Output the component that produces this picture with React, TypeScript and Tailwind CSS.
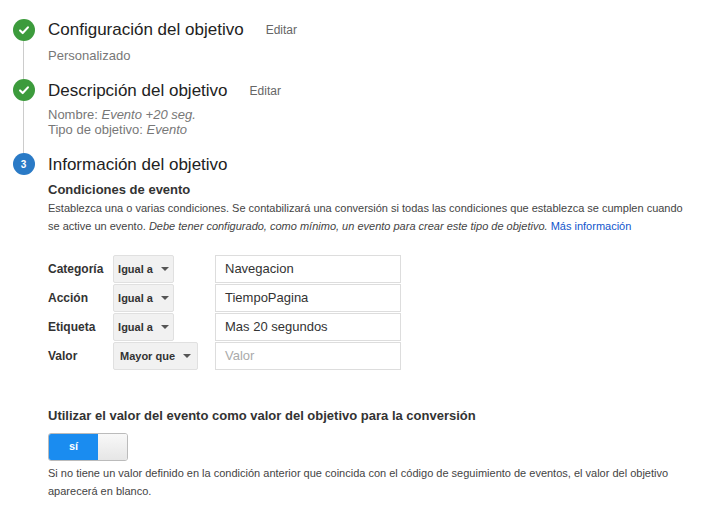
import React from 'react';

const font = { fontFamily: '"Liberation Sans", Arial, sans-serif' };

function Check() {
  return (
    <span className="flex size-[22px] items-center justify-center rounded-full bg-[#3c9b3c]">
      <svg viewBox="0 0 16 16" className="size-[14px]" fill="none" stroke="white" strokeWidth="2.4" strokeLinecap="round" strokeLinejoin="round">
        <path d="M3.5 8.5l3 3 6-6.5" />
      </svg>
    </span>
  );
}

function Select({ label, w }: { label: string; w: string }) {
  return (
    <div className={`flex h-[28px] ${w} items-center justify-center gap-2 whitespace-nowrap rounded-[2px] border border-[#e0e0e0] bg-[#f1f1f1] text-[11px] font-bold text-[#333]`}>
      {label}
      <span className="h-0 w-0 border-x-[4px] border-t-[4px] border-x-transparent border-t-[#555]" />
    </div>
  );
}

const rows = [
  { label: 'Categoría', op: 'Igual a', val: 'Navegacion' },
  { label: 'Acción', op: 'Igual a', val: 'TiempoPagina' },
  { label: 'Etiqueta', op: 'Igual a', val: 'Mas 20 segundos' },
  { label: 'Valor', op: 'Mayor que', val: '' },
];

export default function App() {
  return (
    <div className="h-[513px] w-[710px] overflow-hidden bg-white text-[#222]" style={font}>
      <div className="flex pt-[19px]">
        <div className="flex w-[47px] flex-col items-center">
          <div className="flex w-[54px] flex-col items-center">
            <Check />
            <div className="h-[38px] w-px bg-[#ccc]" />
            <Check />
            <div className="h-[52px] w-px bg-[#ccc]" />
            <span className="flex size-[22px] items-center justify-center rounded-full bg-[#2a7ac6] text-[10px] font-bold text-white">3</span>
          </div>
        </div>
        <div className="flex-1 pl-[1px]">
          <div className="flex h-[22px] items-center">
            <span className="text-[17px] text-[#222]">Configuración del objetivo</span>
            <span className="ml-[22px] text-[12px] text-[#666]">Editar</span>
          </div>
          <div className="mt-[5px] text-[13px] text-[#777]">Personalizado</div>
          <div className="mt-[14px] flex h-[22px] items-center">
            <span className="text-[17px]">Descripción del objetivo</span>
            <span className="ml-[22px] text-[12px] text-[#666]">Editar</span>
          </div>
          <div className="mt-[5px] text-[13px] leading-[15px] text-[#777]">
            <div>Nombre: <i>Evento +20 seg.</i></div>
            <div>Tipo de objetivo: <i>Evento</i></div>
          </div>
          <div className="mt-[17px] flex h-[22px] items-center text-[17px]">Información del objetivo</div>
          <div className="mt-[4px] text-[13px] font-bold text-[#333]">Condiciones de evento</div>
          <p className="mt-[0px] w-[640px] text-[11px] leading-[18px] text-[#444]">
            Establezca una o varias condiciones. Se contabilizará una conversión si todas las condiciones que establezca se cumplen cuando se active un evento. <i>Debe tener configurado, como mínimo, un evento para crear este tipo de objetivo.</i> <span className="text-[#15c]">Más información</span>
          </p>
          <div className="mt-[20px] flex flex-col gap-px">
            {rows.map((r) => (
              <div key={r.label} className="flex h-[28px] items-center">
                <span className="w-[65px] text-[12px] font-bold text-[#333]">{r.label}</span>
                <div className="w-[102px]">
                  <Select label={r.op} w={r.op === 'Igual a' ? 'w-[61px]' : 'w-[85px]'} />
                </div>
                <div className={`flex h-[28px] w-[186px] items-center border border-[#ddd] px-[9px] text-[13px] ${r.val ? 'text-[#333]' : 'text-[#aaa]'}`}>
                  {r.val || 'Valor'}
                </div>
              </div>
            ))}
          </div>
          <div className="mt-[36px] text-[13px] font-bold text-[#333]">Utilizar el valor del evento como valor del objetivo para la conversión</div>
          <div className="mt-[7px] flex h-[28px] w-[80px] overflow-hidden rounded-[3px] border border-[#bbb]">
            <div className="flex w-[49px] items-center justify-center bg-[#1a8cf0] text-[11px] font-bold text-white">sí</div>
            <div className="flex-1 bg-gradient-to-b from-[#f8f8f8] to-[#e6e6e6]" />
          </div>
          <p className="mt-[3px] w-[650px] text-[11px] leading-[18px] text-[#444]">
            Si no tiene un valor definido en la condición anterior que coincida con el código de seguimiento de eventos, el valor del objetivo aparecerá en blanco.
          </p>
        </div>
      </div>
    </div>
  );
}
